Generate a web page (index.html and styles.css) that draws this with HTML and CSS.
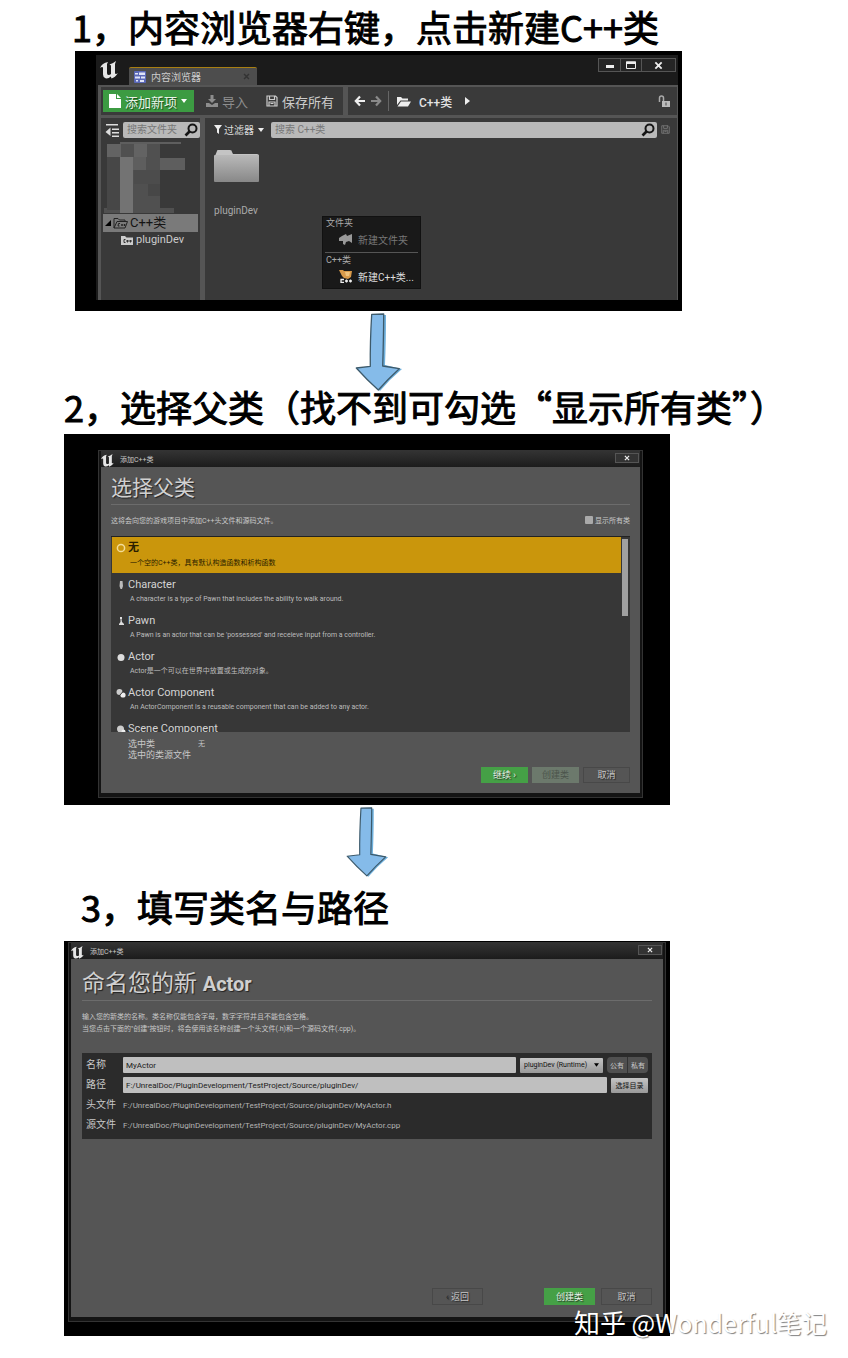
FILE: index.html
```html
<!DOCTYPE html>
<html lang="zh-CN">
<head>
<meta charset="utf-8">
<meta name="viewport" content="width=device-width, initial-scale=1">
<title>新建C++类</title>
<link rel="stylesheet" href="styles.css">
</head>
<body>
<svg class="defs" aria-hidden="true">
  <symbol id="ue" viewBox="0 0 18 18"><path d="M0 7Q2 2 8 1L7 3V12Q7 14 8.500 14 10 14 11 13V4.500L9.500 3.500Q13 2.500 16 0L15 3V12.500Q16 13.500 18 12 15 16.500 11.500 17.500L10.800 15.500Q8.500 17.800 5.500 17.300 3 16.500 3 13.500V6.500Q2 5.500 0 7Z"/></symbol>
  <symbol id="arrow" viewBox="0 -1 48 80">
    <path fill="#6fb0dc" d="M19 3L31 3Q31 30 30 53L47 57Q35 67 25 79L20 74Z"/>
    <path fill="#85bbe9" stroke="#3d5a6b" stroke-width="1.300" stroke-linejoin="round" d="M16.700 2.300L28.700 2Q28.500 30 27.700 54L44.300 56.700Q33 67 23.300 78Q12 68 1.300 56L15.300 54.300Q15 30 16.700 2.300Z"/>
  </symbol>
  <symbol id="lens" viewBox="0 0 14 14"><circle cx="8.500" cy="5.500" r="4" fill="none" stroke="currentColor" stroke-width="2"/><path d="M5.500 8.500L1.500 12.500" stroke="currentColor" stroke-width="2.600"/></symbol>
  <symbol id="save" viewBox="0 0 12 12"><path fill="none" stroke="currentColor" stroke-width="1.200" d="M1 1H9.500L11 2.500V11H1ZM3.500 1V4.500H8.500V1M3 11V7H9V11M4.500 8.500H7.500"/></symbol>
  <symbol id="close" viewBox="0 0 10 10"><path stroke="currentColor" stroke-width="2" d="M1.500 1.500L8.500 8.500M8.500 1.500L1.500 8.500"/></symbol>
</svg>

<main class="guide">
  <section>
    <h2 class="step-title step-one">1，内容浏览器右键，点击新建C++类</h2>
    <div class="shot shot-browser">
      <div class="browser">
        <header class="browser-bar">
          <svg class="logo"><use href="#ue"/></svg>
          <div class="tab">
            <svg class="tab-icon" viewBox="0 0 12 12"><rect width="12" height="12" rx="1" fill="#5a68b8"/><path fill="#dfe4f8" d="M1 2H4V3.500H1ZM5 1.500H11V4H5ZM1 5.500H6V7.500H1ZM7 5.500H11V7.500H7ZM2 9H4V10.500H2ZM6 9H10V11H6Z"/></svg>
            <span>内容浏览器</span>
            <svg class="tab-close"><use href="#close"/></svg>
          </div>
          <div class="win-buttons">
            <button aria-label="最小化"><svg viewBox="0 0 12 10"><path fill="currentColor" d="M2 5H10V8H2Z"/></svg></button>
            <button aria-label="最大化"><svg viewBox="0 0 12 10"><path fill="none" stroke="currentColor" d="M1.500 2H10.500V8.500H1.500Z"/><path fill="currentColor" d="M1 1.500H11V4H1Z"/></svg></button>
            <button class="wide" aria-label="关闭"><svg><use href="#close"/></svg></button>
          </div>
        </header>
        <div class="browser-body">
          <div class="toolbar">
            <div class="group actions">
              <button class="add"><svg viewBox="0 0 12 14"><path fill="#fff" d="M0 0H7V5H12V14H0ZM8 0L12 4H8Z"/></svg>添加新项<svg class="caret" viewBox="0 0 6 4"><path fill="#fff" d="M0 0H6L3 4Z"/></svg></button>
              <button class="tool dim"><svg viewBox="0 0 12 12"><path fill="currentColor" d="M4.500 0H7.500V4H10L6 8 2 4H4.500ZM0 8H3L6 10 9 8H12V12H0Z"/></svg>导入</button>
              <button class="tool"><svg><use href="#save"/></svg>保存所有</button>
            </div>
            <div class="group path">
              <button class="nav" aria-label="后退"><svg viewBox="0 0 12 12"><path fill="none" stroke="#eee" stroke-width="2.200" d="M11 6H2M6 1.500L1.800 6 6 10.500"/></svg></button>
              <button class="nav" aria-label="前进"><svg viewBox="0 0 12 12"><path fill="none" stroke="#8a8a8a" stroke-width="2.200" d="M1 6H10M6 1.500L10.200 6 6 10.500"/></svg></button>
              <span class="rule"></span>
              <svg class="open" viewBox="0 0 14 11"><path fill="#eee" d="M0 1H4L5.500 2.500H11V4.500H3.500L0 9ZM4 5.500H14L11 10.500H0.500Z"/></svg>
              <b>C++类</b>
              <svg class="next" viewBox="0 0 5 8"><path fill="#eee" d="M0 0L5 4 0 8Z"/></svg>
              <svg class="lock" viewBox="0 0 12 12"><path fill="none" stroke="#aaa" stroke-width="1.500" d="M1.500 7V3Q1.500 1 3.500 1T5.500 3V6"/><path fill="#bbb" d="M4 6H12V12H4Z"/><path fill="#444" d="M7.500 7.500H8.500V10.500H7.500Z"/></svg>
            </div>
          </div>
          <div class="panes">
            <aside class="pane tree">
              <div class="search-row">
                <svg class="list-icon" viewBox="0 0 14 14"><path fill="#ddd" d="M1 1H13V2.500H1ZM7 5.500H14V7H7ZM7 9H14V10.500H7ZM7 12.500H14V14H7ZM5.500 4.500V13L0.500 9Z"/></svg>
                <label class="field"><input type="text" placeholder="搜索文件夹" aria-label="搜索文件夹"><svg><use href="#lens"/></svg></label>
              </div>
              <svg class="mosaic" viewBox="0 0 95 74" preserveAspectRatio="none">
                <path fill="#505050" d="M5 4H58V18H83V30H58V68H72V73H2V68H5Z"/>
                <path fill="#474747" d="M5 17H19V70H5ZM46 44H58V56H46Z"/>
                <path fill="#4c4c4c" d="M32 30H58V44H32Z"/>
                <path fill="#636363" d="M5 4H19V17H5ZM32 4H45V17H32Z"/>
                <path fill="#737373" d="M18 17H31V73H18Z"/>
                <path fill="#5e5e5e" d="M18 2H79V4H18ZM58 18H83V30H58ZM31 17H44V30H31Z"/>
              </svg>
              <div class="node selected"><svg class="mark" viewBox="0 0 6 6"><path d="M6 0V6H0Z"/></svg><svg class="folder" viewBox="0 0 15 12"><path fill="none" stroke="#222" d="M1 11V1.500H5L6.500 3H12V4.500M1 11L4 4.500H14.500L12 11Z"/><path fill="none" stroke="#222" d="M7 6.500H5.500L5 9H6.500M8 8H10M9 7V9M10.500 8H12.500M11.500 7V9"/></svg>C++类</div>
              <div class="node child"><svg class="folder" viewBox="0 0 14 11"><path fill="#ccc" d="M1 1H5L6.500 2.500H13V10H1Z"/><path fill="none" stroke="#333" d="M5.500 4.500H4V7.500H5.500M6 6H9M7.500 5V7.500M9 6H12M10.500 5V7.500"/></svg>pluginDev</div>
            </aside>
            <div class="pane files">
              <div class="search-row">
                <button class="filter"><svg class="funnel" viewBox="0 0 8 9"><path fill="#eee" d="M0 0H8L5 4V9L3 7.500V4Z"/></svg>过滤器<svg class="caret" viewBox="0 0 6 4"><path fill="#eee" d="M0 0H6L3 4Z"/></svg></button>
                <label class="field"><input type="text" placeholder="搜索 C++类" aria-label="搜索 C++类"><svg><use href="#lens"/></svg></label>
                <svg class="save-dim"><use href="#save"/></svg>
              </div>
              <div class="tile">
                <svg viewBox="0 0 46 32"><defs><linearGradient id="fg" x2="0" y2="1"><stop stop-color="#b9b9b9"/><stop offset="1" stop-color="#888"/></linearGradient></defs><path fill="#c4c4c4" d="M2 6L4 1Q4 0 5 0H17Q19 0 19 2L20 4H44Q46 4 46 6V10H2Z"/><rect x="1" y="5" width="45" height="27" rx="1" fill="url(#fg)"/></svg>
                <span>pluginDev</span>
              </div>
              <div class="menu">
                <p>文件夹</p>
                <button class="off"><svg viewBox="0 0 14 14"><path fill="#999" d="M3 4L7 2 8 4 13 2V11L10 9 7 10 6 13 4 12V9L0 9V6Z"/></svg>新建文件夹</button>
                <hr>
                <p>C++类</p>
                <button><svg viewBox="0 0 14 14"><path fill="#d99a4a" d="M0 1H4L5 2H13L12 8 9 10 5 9 3 7Z"/><path fill="#f0c27c" d="M6 3H11L10 7H7Z"/><path fill="none" stroke="#eee" stroke-width="1.300" d="M5 10.500H2V13.500H5M6 12H9M7.500 10.500V13.500M10 12H13M11.500 10.500V13.500"/></svg>新建C++类...</button>
              </div>
            </div>
          </div>
        </div>
      </div>
    </div>
  </section>

  <section>
    <svg class="arrow first"><use href="#arrow"/></svg>
    <h2 class="step-title step-two">2，选择父类（找不到可勾选“显示所有类”）</h2>
    <div class="shot shot-parent">
      <div class="dialog">
        <header class="dialog-bar"><svg class="logo"><use href="#ue"/></svg><span>添加C++类</span><button aria-label="关闭"><svg><use href="#close"/></svg></button></header>
        <div class="dialog-body">
          <h3>选择父类</h3>
          <div class="intro"><p>这将会向您的游戏项目中添加C++头文件和源码文件。</p><label><input type="checkbox">显示所有类</label></div>
          <div class="list">
            <ul>
              <li class="chosen"><svg viewBox="0 0 10 10"><circle cx="5" cy="5" r="3.600" fill="none" stroke="#f3dc98" stroke-width="1.500"/></svg><strong>无</strong><p>一个空的C++类，具有默认构造函数和析构函数</p></li>
              <li><svg viewBox="0 0 10 10"><path fill="#bbb" d="M4 1H6.500L7 6 6 9H4.500L3.500 6Z"/></svg><strong>Character</strong><p>A character is a type of Pawn that includes the ability to walk around.</p></li>
              <li><svg viewBox="0 0 10 10"><path fill="#ddd" d="M4 1H6V3H5.500L6 6 8 8V9H3V8L4.500 6V3H4Z"/></svg><strong>Pawn</strong><p>A Pawn is an actor that can be 'possessed' and receieve input from a controller.</p></li>
              <li><svg viewBox="0 0 10 10"><circle cx="5" cy="5.500" r="3.500" fill="#ddd"/></svg><strong>Actor</strong><p>Actor是一个可以在世界中放置或生成的对象。</p></li>
              <li><svg viewBox="0 0 10 10"><circle cx="3.500" cy="4" r="3" fill="#ccc"/><circle cx="7" cy="7" r="2.600" fill="#eee"/><path stroke="#333" d="M3 8L8 2.500"/></svg><strong>Actor Component</strong><p>An ActorComponent is a reusable component that can be added to any actor.</p></li>
              <li><svg viewBox="0 0 10 10"><circle cx="4.500" cy="5" r="3.500" fill="#ccc"/><circle cx="7.500" cy="7.500" r="2" fill="#eee"/></svg><strong>Scene Component</strong></li>
            </ul>
            <div class="scroll"><i></i></div>
          </div>
          <dl class="picked"><dt>选中类</dt><dd>无</dd><dt>选中的类源文件</dt><dd></dd></dl>
          <div class="buttons"><button class="go">继续 ›</button><button class="muted" disabled>创建类</button><button>取消</button></div>
        </div>
      </div>
    </div>
  </section>

  <section>
    <svg class="arrow second"><use href="#arrow"/></svg>
    <h2 class="step-title step-three">3，填写类名与路径</h2>
    <div class="shot shot-name">
      <div class="dialog">
        <header class="dialog-bar"><svg class="logo"><use href="#ue"/></svg><span>添加C++类</span><button aria-label="关闭"><svg><use href="#close"/></svg></button></header>
        <div class="dialog-body">
          <h3>命名您的新 <b>Actor</b></h3>
          <p class="note">输入您的新类的名称。类名称仅能包含字母，数字字符并且不能包含空格。<br>当您点击下面的"创建"按钮时，将会使用该名称创建一个头文件(.h)和一个源码文件(.cpp)。</p>
          <form class="form">
            <div class="row">
              <label for="name">名称</label><input id="name" value="MyActor">
              <span class="select"><select aria-label="模块"><option>pluginDev (Runtime)</option></select><svg viewBox="0 0 6 4"><path d="M0 0H6L3 4Z"/></svg></span>
              <span class="toggle"><button type="button">公有</button><button type="button">私有</button></span>
            </div>
            <div class="row"><label for="path">路径</label><input id="path" value="F:/UnrealDoc/PluginDevelopment/TestProject/Source/pluginDev/"><button type="button" class="choose">选择目录</button></div>
            <div class="row"><span class="key">头文件</span><output>F:/UnrealDoc/PluginDevelopment/TestProject/Source/pluginDev/MyActor.h</output></div>
            <div class="row"><span class="key">源文件</span><output>F:/UnrealDoc/PluginDevelopment/TestProject/Source/pluginDev/MyActor.cpp</output></div>
          </form>
          <div class="buttons"><button class="back"><span>‹</span> 返回</button><button class="go">创建类</button><button>取消</button></div>
        </div>
      </div>
    </div>
  </section>
  <p class="watermark"><span>知乎</span> @Wonderful笔记</p>
</main>
</body>
</html>
```
FILE: styles.css
```css
* { box-sizing: border-box; }

body, h2, h3, p, ul, dl, dd { margin: 0; padding: 0; }

body {
  background: #fff;
  font-family: Roboto, "Noto Sans CJK SC", sans-serif;
}

button, input, select {
  font: inherit;
  color: inherit;
  margin: 0;
  padding: 0;
  border: 0;
  background: none;
  border-radius: 0;
}

svg { display: block; flex: none; }
.defs { position: absolute; width: 0; height: 0; }
.guide { position: relative; padding-bottom: 22px; }

.step-title {
  color: #000;
  font: 400 36px/36px "Noto Sans CJK SC", sans-serif;
  -webkit-text-stroke: 1px #000;
  white-space: nowrap;
}
.step-one { padding: 8px 0 7px 72px; }
.step-two { padding: 0 0 10px 64px; margin-top: -3px; }
.step-three { padding: 11px 0 17px 81px; }

.arrow.first { width: 48px; height: 80px; margin-left: 355px; }
.arrow.second { width: 43px; height: 72px; margin-left: 346px; }

.shot { background: #000; margin: 0 178px 0 64px; }
.shot-browser { margin: 0 166px 0 75px; padding: 4px 4px 11px 21px; }
.shot-parent { padding: 16px 27px 7px 34px; }
.shot-name { padding: 1px 4px 14px 4px; }
.logo { fill: #e6e6e6; }

/* Content browser */
.browser { background: #1b1b1b; padding-left: 2px; color: #ccc; }
.browser-bar { display: flex; height: 30px; align-items: flex-start; padding: 0 2px; }
.browser-bar .logo { width: 18px; height: 18px; margin-top: 6px; }
.tab {
  display: flex;
  align-items: center;
  align-self: flex-end;
  width: 128px;
  height: 18px;
  margin-left: 11px;
  padding: 0 7px 0 5px;
  gap: 5px;
  background: #4d4d4d;
  border-top: 1px solid #a87f12;
  border-radius: 2px 2px 0 0;
  font-size: 10px;
}
.tab-icon { width: 12px; height: 12px; }
.tab-close { width: 7px; height: 7px; margin-left: auto; color: #333; }
.win-buttons { display: flex; margin: 3px 0 0 auto; height: 14px; border: 1px solid #555; }
.win-buttons button { width: 21px; display: grid; place-items: center; color: #eee; background: #252525; }
.win-buttons button + button { border-left: 1px solid #555; }
.win-buttons .wide { width: 34px; }
.win-buttons svg { width: 12px; height: 10px; }
.win-buttons .wide svg { width: 9px; height: 9px; }

.browser-body { background: #555; padding: 2px 1px 0 3px; }
.toolbar { display: flex; gap: 5px; }
.group { display: flex; align-items: center; height: 28px; background: #3a3a3a; font-size: 13px; }
.actions { width: 242px; padding-left: 2px; }
.add {
  display: flex;
  align-items: center;
  gap: 4px;
  width: 91px;
  height: 22px;
  padding-left: 6px;
  background: #3c9b42;
  color: #e8f4e8;
  text-shadow: 1px 1px 1px #164a19;
}
.add svg { width: 12px; height: 14px; }
.add .caret, .caret { width: 6px; height: 4px; }
.tool { display: flex; align-items: center; gap: 4px; margin-left: 12px; }
.tool + .tool { margin-left: 18px; }
.tool svg { width: 12px; height: 12px; }
.dim { color: #8d8d8d; }
.path { flex: 1; padding: 0 7px 0 6px; font-size: 12px; }
.nav { margin-right: 4px; }
.nav svg { width: 12px; height: 12px; }
.rule { width: 1px; height: 20px; background: #666; margin: 0 8px 0 2px; }
.open { width: 14px; height: 11px; margin-right: 8px; }
.path b { font-weight: 500; color: #e4e4e4; }
.next { width: 5px; height: 8px; margin-left: 13px; }
.lock { width: 12px; height: 12px; margin-left: auto; }

.panes { display: grid; grid-template-columns: 99px 1fr; gap: 5px; margin-top: 3px; height: 182px; }
.pane { background: #393939; padding-top: 3px; position: relative; }
.search-row { display: flex; align-items: center; height: 17px; font-size: 10px; }
.field { display: flex; align-items: center; flex: 1; min-width: 0; height: 16px; background: #b9b9b9; border-radius: 2px; padding: 0 2px 0 4px; }
.field input { flex: 1; min-width: 0; height: 16px; appearance: none; outline: 0; color: #222; }
.field input::placeholder { color: #777; opacity: 1; }
.field svg { width: 14px; height: 14px; color: #151515; }
.list-icon { width: 14px; height: 14px; margin: 0 4px; }
.mosaic { width: 95px; height: 74px; margin: 2px 0 0 1px; }
.node { display: flex; align-items: center; color: #ccc; font-size: 11px; line-height: 14px; }
.selected { margin: 0 2px; height: 18px; background: #7a7a7a; color: #151515; font-size: 13px; padding-left: 2px; }
.mark { width: 6px; height: 6px; }
.selected .folder { width: 15px; height: 12px; margin: 0 2px 0 2px; }
.child { padding: 1px 0 0 19px; }
.child .folder { width: 14px; height: 11px; margin-right: 2px; }
.files .search-row { padding: 0 7px 0 9px; }
.filter { display: flex; align-items: center; gap: 2px; margin-right: 7px; color: #ddd; }
.filter .caret { margin-left: 2px; }
.funnel { width: 8px; height: 9px; }
.save-dim { width: 9px; height: 9px; margin-left: 4px; color: #777; }
.tile { display: inline-grid; justify-items: center; gap: 22px; margin: 12px 0 0 8px; color: #aaa; font-size: 10px; line-height: 14px; }
.tile svg { width: 46px; height: 32px; }

.menu { position: absolute; left: 117px; top: 98px; width: 99px; padding: 1px 2px 2px; background: #191919; border: 1px solid #111; font-size: 10px; color: #aaa; }
.menu p { line-height: 11px; font-size: 9px; padding-left: 1px; }
.menu button { display: flex; align-items: center; gap: 5px; width: 100%; height: 20px; padding-left: 14px; color: #ddd; white-space: nowrap; }
.menu .off { color: #777; }
.menu svg { width: 14px; height: 14px; }
.menu hr { height: 1px; border: 0; margin: 3px 0 2px; background: #555; }

/* Class wizard dialogs */
.dialog { background: #141414; border: 1px solid #333; padding: 0 2px 4px; color: #c8c8c8; }
.dialog-bar { display: flex; align-items: center; height: 16px; background: linear-gradient(#333, #1c1c1c); font-size: 7px; }
.dialog-bar .logo { width: 13px; height: 13px; margin: 3px 6px 0 0; }
.dialog-bar button { display: grid; place-items: center; width: 24px; height: 10px; margin: 0 1px 2px auto; border: 1px solid #555; color: #eee; background: #333; }
.dialog-bar button svg { width: 6px; height: 6px; }
.dialog-body { background: #555; padding: 5px 10px 10px; }
.dialog h3 { border-bottom: 1px solid #6c6c6c; color: #d0d0d0; font-size: 21px; font-weight: 400; line-height: 32px; text-shadow: 1px 1px 1px #222; }
.intro { display: flex; justify-content: space-between; align-items: center; height: 31px; padding-bottom: 2px; font-size: 7px; }
.intro label { display: flex; align-items: center; gap: 2px; }
.intro input { appearance: none; width: 8px; height: 8px; background: #aaa; border-radius: 1px; }

.list { display: grid; grid-template-columns: 1fr 9px; height: 196px; overflow: hidden; padding: 0 0 0 1px; background: #373737; border-top: 1px solid #222; }
.list ul { list-style: none; }
.list li { display: grid; grid-template-columns: 10px 1fr; column-gap: 2px; row-gap: 2px; height: 36px; padding: 4px; }
.list li + li { padding-top: 5px; row-gap: 1px; }
.list li svg { width: 10px; height: 10px; margin-top: 2px; }
.list strong { font-size: 11px; line-height: 14px; font-weight: 400; color: #d4d4d4; }
.list p { grid-column: 2; padding-left: 2px; font-size: 7px; line-height: 12px; color: #bdbdbd; }
.list .chosen { background: #ca960c; }
.list .chosen strong, .list .chosen p { color: #2b1e00; }
.list .chosen strong { font-weight: 700; }
.scroll { padding: 2px 2px 0 1px; }
.scroll i { display: block; height: 77px; background: #a0a0a0; }
.picked { display: grid; grid-template-columns: 70px 1fr; padding: 7px 0 0 17px; font-size: 9px; line-height: 11px; }
.picked dt { white-space: nowrap; }
.picked dd { font-size: 7px; }

.buttons { display: flex; justify-content: flex-end; gap: 4px; margin-top: 6px; font-size: 9px; }
.buttons button { width: 47px; height: 16px; border: 1px solid #484848; line-height: 12px; text-shadow: 1px 1px 1px #222; }
.buttons .go { background: #45a046; border-color: #45a046; color: #e8f4e8; }
.buttons .muted { background: #6c796c; border-color: #6c796c; color: #4b544b; text-shadow: none; }

.shot-name .dialog-body { padding: 9px 11px 12px; }
.shot-name h3 { font-size: 23px; }
.shot-name h3 b { font-size: 20px; font-weight: 700; }
.note { padding-top: 10px; font-size: 7px; line-height: 12px; }
.form { margin-top: 18px; padding: 2px 4px 4px; background: #2b2b2b; }
.row { display: flex; align-items: center; gap: 4px; height: 20px; font-size: 7px; }
.row label, .key { width: 33px; font-size: 10px; line-height: 14px; }
.row output { font-size: 8px; color: #b4b4b4; }
.row input { flex: 1; min-width: 0; height: 16px; padding: 0 3px; background: #bfbfbf; color: #1a1a1a; font-size: 8px; border-radius: 1px; }
.select { display: grid; align-items: center; width: 83px; height: 15px; color: #111; background: linear-gradient(#c4c4c4, #999); border-radius: 1px; }
.select select { grid-area: 1 / 1; width: 100%; height: 15px; padding-left: 4px; appearance: none; }
.select svg { grid-area: 1 / 1; justify-self: end; width: 5px; height: 4px; margin-right: 4px; pointer-events: none; }
.toggle { display: flex; width: 41px; height: 16px; border-radius: 4px; background: #505050; overflow: hidden; }
.toggle button { flex: 1; }
.toggle button + button { border-left: 1px solid #333; }
.choose { width: 37px; height: 15px; background: linear-gradient(#c4c4c4, #999); color: #111; border-radius: 1px; }
.shot-name .buttons { margin-top: 149px; gap: 6px; }
.shot-name .buttons button { width: 51px; height: 17px; }
.shot-name .back { margin-right: 55px; }
.back span { color: #222; }

.watermark {
  position: absolute;
  right: 21px;
  bottom: 19px;
  color: #fff;
  font: 25px/34px "Noto Sans CJK SC", sans-serif;
  text-shadow: 1px 1px 1px rgba(0, 0, 0, 0.5);
  white-space: nowrap;
}
.watermark span { font-size: 26px; }
```
